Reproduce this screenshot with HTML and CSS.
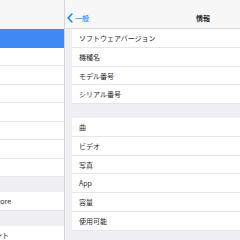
FILE: index.html
```html
<!DOCTYPE html>
<html lang="ja">
<head>
    <meta charset="UTF-8">
    <meta name="viewport" content="width=device-width, initial-scale=1.0">
    <title>情報</title>
    <link rel="stylesheet" href="styles.css">
</head>
<body>
    <div class="screen">
        <aside class="sidebar">
            <div class="side-inner">
                <div class="side-top"></div>
                <ul class="group">
                    <li class="selected"></li>
                    <li></li>
                    <li></li>
                    <li></li>
                    <li></li>
                    <li></li>
                    <li></li>
                    <li></li>
                </ul>
                <ul class="group">
                    <li>iTunes StoreとApp Store</li>
                </ul>
                <ul class="group">
                    <li>パスワードとアカウント</li>
                </ul>
            </div>
        </aside>

        <main class="detail">
            <header class="navbar">
                <a class="back" href="#">
                    <svg width="6" height="10" viewBox="0 0 6 10"><path d="M5 1 L1 5 L5 9" fill="none" stroke="#007aff" stroke-width="1.3" stroke-linecap="round" stroke-linejoin="round"/></svg>
                    一般
                </a>
                <h1>情報</h1>
            </header>

            <div class="content">
                <ul class="group">
                    <li>ソフトウェアバージョン</li>
                    <li>機種名</li>
                    <li>モデル番号</li>
                    <li>シリアル番号</li>
                </ul>
                <ul class="group">
                    <li>曲</li>
                    <li>ビデオ</li>
                    <li>写真</li>
                    <li>App</li>
                    <li>容量</li>
                    <li>使用可能</li>
                </ul>
            </div>
        </main>
    </div>
</body>
</html>
```

FILE: styles.css
```css
body {
    margin: 0;
    font-family: "Noto Sans CJK JP", "Noto Sans", sans-serif;
    background: #efeff4;
    color: #2a2a2a;
}

ul {
    list-style: none;
    margin: 0;
    padding: 0;
}

.screen {
    display: flex;
    width: 240px;
    height: 240px;
    overflow: hidden;
}

/* sidebar, only its right end is visible */
.sidebar {
    width: 64px;
    flex-shrink: 0;
    overflow: hidden;
    border-right: 1px solid #d6d6da;
    background: #efeff4;
}

.side-inner {
    width: 160px;
    margin-left: -96px;
}

.side-top {
    height: 29px;
    background: #f7f7f7;
}

.sidebar .group {
    background: #ffffff;
    margin-bottom: 15px;
}

.sidebar .group li {
    height: 18.5px;
    box-sizing: border-box;
    padding: 1px 0 0 28px;
    font-size: 7px;
    line-height: 17px;
    white-space: nowrap;
    border-bottom: 1px solid #e6e6e9;
}

.sidebar .group li.selected {
    background: #3d8af5;
    border-bottom-color: #3d8af5;
}

/* detail pane */
.detail {
    flex: 1;
    display: flex;
    flex-direction: column;
}

.navbar {
    height: 29px;
    flex-shrink: 0;
    box-sizing: border-box;
    display: flex;
    align-items: center;
    background: #f7f7f7;
    border-bottom: 1px solid #dcdcdf;
    padding-left: 2px;
}

.back {
    display: flex;
    align-items: center;
    gap: 2px;
    color: #007aff;
    text-decoration: none;
    font-size: 7px;
    padding-top: 8px;
}

.navbar h1 {
    margin: 0 0 0 107px;
    font-size: 7px;
    font-weight: bold;
    padding-top: 8px;
}

.content {
    padding-left: 7px;
}

.content .group {
    background: #ffffff;
    margin-bottom: 14px;
}

.content .group li {
    height: 18.75px;
    box-sizing: border-box;
    padding: 1px 0 0 7px;
    font-size: 7px;
    line-height: 17px;
    border-bottom: 1px solid #e6e6e9;
}
```
